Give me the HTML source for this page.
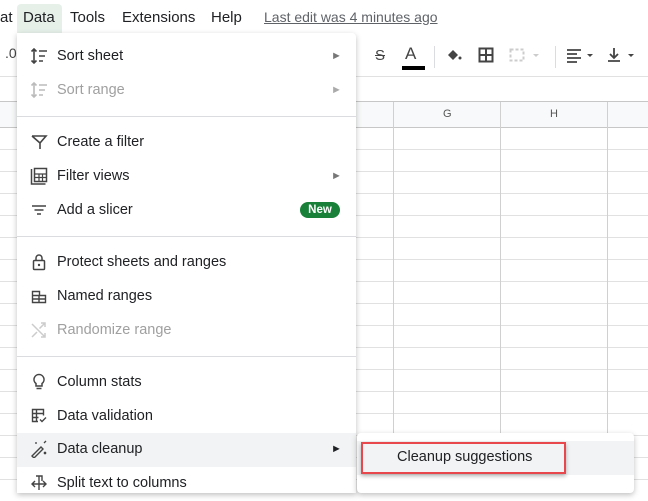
<!DOCTYPE html>
<html><head><style>
*{margin:0;padding:0;box-sizing:border-box}
body{width:648px;height:485px;overflow:hidden;background:#fff;font-family:"Liberation Sans",Arial,sans-serif;position:relative;color:#202124}
.a{position:absolute}
.hl{position:absolute;height:1px;background:#e1e1e1}
.vl{position:absolute;width:1px;background:#e1e1e1}
.mb{font-size:15px;top:9px;color:#202124}
.item{position:absolute;left:17px;width:339px;height:34px;font-size:14.5px;line-height:35px}
.item span{position:absolute;left:40px}
.item svg{position:absolute;left:13px;top:8px}
.dis{color:#a0a0a0}
.arr{position:absolute;left:314px;font-size:11px;color:#777}
.sep{position:absolute;left:17px;width:339px;height:1px;background:#dadce0}
</style></head><body>
<div class="a mb" style="left:0">at</div>
<div class="a" style="left:17px;top:4px;width:45px;height:29px;background:#e6f0e9;border-radius:4px 4px 0 0"></div>
<div class="a mb" style="left:23px">Data</div>
<div class="a mb" style="left:70px">Tools</div>
<div class="a mb" style="left:122px">Extensions</div>
<div class="a mb" style="left:211px">Help</div>
<div class="a mb" style="left:264px;font-size:14px;color:#5f6368;text-decoration:underline">Last edit was 4 minutes ago</div>
<div class="a" style="left:0;top:34px;width:648px;height:42px;background:#fff"></div>
<div class="a" style="left:5px;top:45px;font-size:14px;color:#444">.0</div>
<div class="a" style="left:375px;top:47px;font-size:15px;color:#444;text-decoration:line-through">S</div>
<div class="a" style="left:405px;top:44px;font-size:17px;color:#444">A</div>
<div class="a" style="left:402px;top:66px;width:23px;height:4px;background:#000"></div>
<div class="a" style="left:434px;top:46px;width:1px;height:22px;background:#dadce0"></div>
<svg class="a" style="left:445px;top:46px" width="18" height="18" viewBox="0 0 18 18"><path d="M3 9l5-5 5 5-5 5z" fill="#444"/><circle cx="15" cy="12" r="1.5" fill="#444"/></svg>
<svg class="a" style="left:477px;top:46px" width="18" height="18" viewBox="0 0 18 18"><rect x="2.5" y="2.5" width="13" height="13" fill="none" stroke="#444" stroke-width="2"/><path d="M9 2v14M2 9h14" stroke="#444" stroke-width="2"/></svg>
<svg class="a" style="left:508px;top:46px" width="36" height="18" viewBox="0 0 36 18"><rect x="2.5" y="3.5" width="13" height="11" fill="none" stroke="#ccc" stroke-width="2" stroke-dasharray="3 2"/><path d="M25 8l3 3 3-3z" fill="#ccc"/></svg>
<div class="a" style="left:555px;top:46px;width:1px;height:22px;background:#dadce0"></div>
<svg class="a" style="left:565px;top:46px" width="32" height="18" viewBox="0 0 32 18"><path d="M2 4h14M2 8h10M2 12h14M2 16h10" stroke="#444" stroke-width="1.8"/><path d="M22 8l3 3 3-3z" fill="#444"/></svg>
<svg class="a" style="left:605px;top:46px" width="36" height="18" viewBox="0 0 36 18"><path d="M9 2v10M5 8l4 4 4-4M3 15h12" stroke="#444" stroke-width="1.8" fill="none"/><path d="M23 8l3 3 3-3z" fill="#444"/></svg>
<div class="hl" style="left:0;top:76px;width:648px"></div>
<div class="a" style="left:0;top:102px;width:648px;height:25px;background:#f8f9fa"></div>
<div class="hl" style="left:0;top:101px;width:648px;background:#c7c7c7"></div>
<div class="hl" style="left:0;top:127px;width:648px;background:#c7c7c7"></div>
<div class="hl" style="left:0;top:149px;width:648px"></div>
<div class="hl" style="left:0;top:171px;width:648px"></div>
<div class="hl" style="left:0;top:193px;width:648px"></div>
<div class="hl" style="left:0;top:215px;width:648px"></div>
<div class="hl" style="left:0;top:237px;width:648px"></div>
<div class="hl" style="left:0;top:259px;width:648px"></div>
<div class="hl" style="left:0;top:281px;width:648px"></div>
<div class="hl" style="left:0;top:303px;width:648px"></div>
<div class="hl" style="left:0;top:325px;width:648px"></div>
<div class="hl" style="left:0;top:347px;width:648px"></div>
<div class="hl" style="left:0;top:369px;width:648px"></div>
<div class="hl" style="left:0;top:391px;width:648px"></div>
<div class="hl" style="left:0;top:413px;width:648px"></div>
<div class="hl" style="left:0;top:435px;width:648px"></div>
<div class="hl" style="left:0;top:457px;width:648px"></div>
<div class="hl" style="left:0;top:479px;width:648px"></div>
<div class="vl" style="left:393px;top:102px;height:383px;background:#d0d0d0"></div>
<div class="vl" style="left:500px;top:102px;height:383px;background:#d0d0d0"></div>
<div class="vl" style="left:607px;top:102px;height:383px;background:#d0d0d0"></div>
<div class="a" style="left:443px;top:108px;font-size:11px;color:#555">G</div>
<div class="a" style="left:550px;top:108px;font-size:11px;color:#555">H</div>
<div class="a" style="left:17px;top:33px;width:339px;height:460px;background:#fff;box-shadow:0 2px 6px rgba(0,0,0,.25);border-radius:0 4px 0 0"></div>
<div class="item" style="top:39px"><svg width="20" height="18" viewBox="0 0 20 18"><path d="M4 2v14M1.5 4.5L4 2l2.5 2.5M1.5 13.5L4 16l2.5-2.5M9 4h8M9 9h6M9 14h4" stroke="#444" stroke-width="1.6" fill="none"/></svg><span>Sort sheet</span><div class="arr">►</div></div>
<div class="item dis" style="top:73px"><svg width="20" height="18" viewBox="0 0 20 18"><path d="M4 2v14M1.5 4.5L4 2l2.5 2.5M1.5 13.5L4 16l2.5-2.5M9 4h8M9 9h6M9 14h4" stroke="#bbb" stroke-width="1.6" fill="none"/></svg><span>Sort range</span><div class="arr" style="color:#aaa">►</div></div>
<div class="sep" style="top:116px"></div>
<div class="item" style="top:125px"><svg width="20" height="18" viewBox="0 0 20 18"><path d="M2 3h14l-6 7v6M10 10L2 3" stroke="#444" stroke-width="1.6" fill="none"/></svg><span>Create a filter</span></div>
<div class="item" style="top:159px"><svg width="20" height="18" viewBox="0 0 20 18"><path d="M1.5 2v15h14" stroke="#444" stroke-width="1.5" fill="none"/><rect x="4.5" y="1.5" width="12" height="13" fill="none" stroke="#444" stroke-width="1.5"/><path d="M5 7h11M5 10.5h11M9 7v7M12.5 7v7" stroke="#444" stroke-width="1.2"/></svg><span>Filter views</span><div class="arr">►</div></div>
<div class="item" style="top:193px"><svg width="20" height="18" viewBox="0 0 20 18"><path d="M2 5h14M4.5 9h9M7 13h4" stroke="#444" stroke-width="1.6"/></svg><span>Add a slicer</span><div class="a" style="left:283px;top:9px;width:40px;height:16px;border-radius:8px;background:#188038;color:#fff;font-size:11.5px;font-weight:bold;line-height:16px;text-align:center">New</div></div>
<div class="sep" style="top:236px"></div>
<div class="item" style="top:245px"><svg width="20" height="18" viewBox="0 0 20 18"><rect x="3.5" y="7.5" width="11" height="9" rx="1" fill="none" stroke="#444" stroke-width="1.5"/><path d="M6 7.5V5a3 3 0 016 0v2.5" stroke="#444" stroke-width="1.5" fill="none"/><circle cx="9" cy="12" r="1.2" fill="#444"/></svg><span>Protect sheets and ranges</span></div>
<div class="item" style="top:279px"><svg width="20" height="18" viewBox="0 0 20 18"><path d="M2.5 4.5h7v4h6v7h-13zM2.5 8.5h13M2.5 12h13M9 8.5v7" stroke="#444" stroke-width="1.4" fill="none"/></svg><span>Named ranges</span></div>
<div class="item dis" style="top:313px"><svg width="20" height="18" viewBox="0 0 20 18"><path d="M2 3l13 13M11 16h4v-4M11 2h4v4M15 2L9.5 7.5M2 16l5-5" stroke="#ccc" stroke-width="1.5" fill="none"/></svg><span>Randomize range</span></div>
<div class="sep" style="top:356px"></div>
<div class="item" style="top:365px"><svg width="20" height="18" viewBox="0 0 20 18"><path d="M9 1.5a5 5 0 00-3 9v2.5h6v-2.5a5 5 0 00-3-9zM6.5 15.5h5" stroke="#444" stroke-width="1.5" fill="none"/></svg><span>Column stats</span></div>
<div class="item" style="top:399px"><svg width="20" height="18" viewBox="0 0 20 18"><path d="M8 14.5H2.5v-12h11v6M2.5 6.5h11M6.5 2.5v12M2.5 10.5h6M10 12.5l2 2 4-4" stroke="#444" stroke-width="1.4" fill="none"/></svg><span>Data validation</span></div>
<div class="a" style="left:17px;top:433px;width:339px;height:34px;background:#f1f3f4"></div>
<div class="item" style="top:432px"><svg width="20" height="18" viewBox="0 0 20 18"><path d="M2 16L11 7l2 2-9 9z" stroke="#444" stroke-width="1.4" fill="none"/><path d="M6 2v2M3 4h0M9 4h0M14 2l1 1M16 1l-1 1M14 12l2 2M16 12l-2 2" stroke="#444" stroke-width="1.3"/></svg><span>Data cleanup</span><div class="arr" style="color:#202124">►</div></div>
<div class="item" style="top:466px"><svg width="20" height="18" viewBox="0 0 20 18"><path d="M6 2h6v5M9 2v14M2 10h14M5 7l-3 3 3 3M13 7l3 3-3 3" stroke="#444" stroke-width="1.4" fill="none"/></svg><span>Split text to columns</span></div>
<div class="a" style="left:357px;top:433px;width:277px;height:60px;background:#fff;box-shadow:0 2px 6px rgba(0,0,0,.25);border-radius:4px"></div>
<div class="a" style="left:357px;top:441px;width:277px;height:34px;background:#f1f3f4"></div>
<div class="a" style="left:361px;top:442px;width:205px;height:32px;border:2.5px solid #e8484b;box-shadow:0 2px 4px rgba(0,0,0,.3)"></div>
<div class="a" style="left:397px;top:449px;font-size:14.5px;color:#202124">Cleanup suggestions</div>
</body></html>
